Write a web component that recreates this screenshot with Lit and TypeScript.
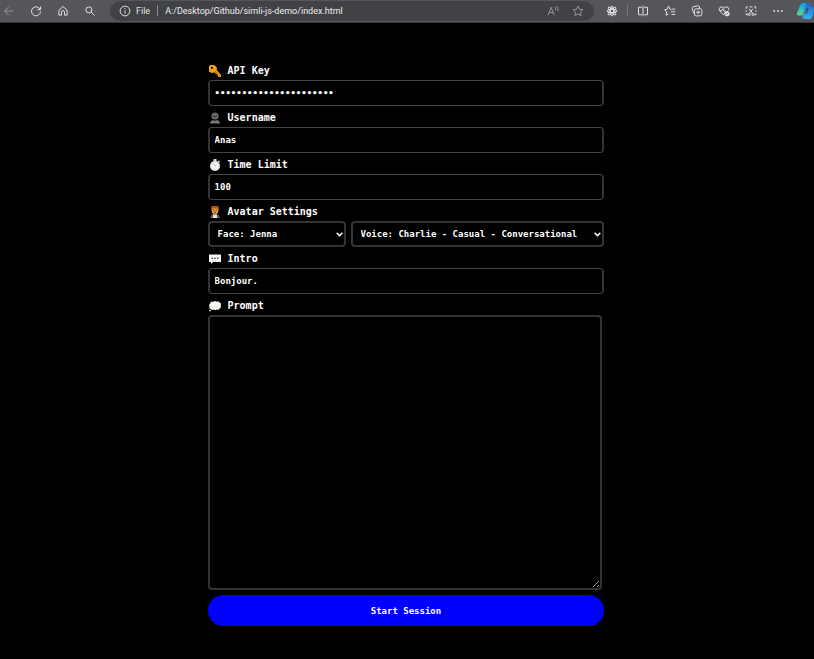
import { LitElement, html, css, svg } from "lit";
import { customElement, state } from "lit/decorators.js";

const line = (body: unknown) => html`<svg class="line" viewBox="0 0 16 16" aria-hidden="true">${body}</svg>`;

const icons = {
  back: line(svg`<path d="M14 8H2M7.500 2.500 2 8l5.500 5.500"/>`),
  reload: line(svg`<path d="M13.500 6A6 6 0 1 0 14 8.500M14 2v4.200H9.800"/>`),
  home: line(svg`<path d="M2.500 7 8 2l5.500 5v6.500H10V9.500a2 2 0 0 0-4 0v4H2.500z"/>`),
  search: line(svg`<circle cx="6.500" cy="6.500" r="4"/><path d="m9.500 9.500 4.500 4.500"/>`),
  info: line(svg`<circle cx="8" cy="8" r="6.500"/><path d="M8 7v4.500M8 4.300v1.400"/>`),
  read: line(svg`<path d="M1.500 13.500 5.500 3l4 10.500M3 10h5M10 3q2 1.500 1.500 4M12.500 1.500q3 2.500 2 6.500"/>`),
  star: line(svg`<path d="m8 1.500 2 4.200 4.600.6-3.400 3.200.9 4.600L8 11.800l-4.100 2.300.9-4.600L1.400 6.300 6 5.700z"/>`),
  react: line(svg`<g stroke-width="1.300"><ellipse cx="8" cy="8" rx="6.800" ry="2.400"/><ellipse cx="8" cy="8" rx="6.800" ry="2.400" transform="rotate(45 8 8)"/><ellipse cx="8" cy="8" rx="6.800" ry="2.400" transform="rotate(90 8 8)"/><ellipse cx="8" cy="8" rx="6.800" ry="2.400" transform="rotate(135 8 8)"/></g>`),
  split: line(svg`<path d="M6.500 3H2v10h4.500M9.500 3H14v10H9.500M8 1v14"/>`),
  favorites: line(svg`<path d="M9.500 6 8 5.700 6 1.500 4.200 5.700.8 6.300 3.500 9l-.8 4.600L6 11.800M10 5.500h5M9 9h6M10 12.500h5"/>`),
  collections: line(svg`<path d="M3.500 11 1.500 4.500q-.3-1.500 1-2L9 1q1.500-.3 2 1l.7 2.500"/><rect x="4.500" y="5" width="10" height="9.500" rx="2.500"/><path d="M9.500 7.200v5M7 9.700h5"/>`),
  health: line(svg`<path d="M8 13.500 2.300 8q-2-3 .5-5 3-1.500 5.200 1.200Q10.200 1.500 13.200 3q2 2 1 4M2 7.500h3L6.500 5l2 4 1-1.500"/><circle class="solid" cx="12" cy="11.500" r="3"/><path class="cut" d="m10.500 13 3-3"/>`),
  capture: line(svg`<path d="M1.500 5V2.500H4M6 2.500h4M12 2.500h2.500V5M14.500 7v2M1.500 7v2M1.500 11v2H4M14.500 11v2H12M5.500 5l4.500 6M10.500 5 6 11"/><circle cx="5.500" cy="12.500" r="1.400"/><circle cx="10.500" cy="12.500" r="1.400"/>`),
  more: line(svg`<g class="solid"><circle cx="3" cy="8" r=".8"/><circle cx="8" cy="8" r=".8"/><circle cx="13" cy="8" r=".8"/></g>`),
  copilot: html`<svg class="copilot" viewBox="0 0 18 18" aria-hidden="true">
    <defs>
      <linearGradient id="left" x1="0" y1="0" x2="0" y2="1"><stop offset="0" stop-color="#1597e8"/><stop offset=".5" stop-color="#20c4bf"/><stop offset="1" stop-color="#79cf71"/></linearGradient>
      <linearGradient id="right" x1="0" y1="0" x2="0" y2="1"><stop offset="0" stop-color="#1b62d9"/><stop offset="1" stop-color="#32b5f4"/></linearGradient>
    </defs>
    <path fill="url(#left)" d="M4 3.500Q5 1 7.500 1H12q-2 1-2.500 3L7.500 11q-.8 2.500-3 2.500H3Q.2 13.500 1 11z"/>
    <path fill="url(#right)" d="M10 1h2q2 0 2.500 2l.6 2H17q1.500 0 1 2.500L16.500 14q-1 3-3.500 3H9q-2 0-2.500-2L6 13.500q1.500-.5 2-2.500l2-7z"/>
    <path fill="#4b4c50" d="m10.500 6-1.500 6 2-.5L12.500 6z"/>
  </svg>`,
};

const emoji = {
  key: html`<svg class="emoji" viewBox="0 0 12 12" aria-hidden="true"><path fill="#f2a20d" fill-rule="evenodd" d="M4.200 0a4 4 0 0 1 3.500 5.300L12 9.800V12h-2.200L8.500 10.500 7.700 9 6.500 8.500 5.300 7.200A4 4 0 1 1 4.200 0zM3 1.700a1.100 1.100 0 1 0 0 2.200 1.100 1.100 0 0 0 0-2.200z"/><path stroke="#b56f08" d="m6 6 5 5.200"/></svg>`,
  user: html`<svg class="emoji" viewBox="0 0 12 12" aria-hidden="true"><circle cx="6" cy="4" r="3.600" fill="#66686b"/><path fill="#77797c" d="M1 11.500q0-3 3.200-3.300h3.600q3.200.3 3.200 3.300z"/><path stroke="#303133" fill="none" d="M4 3.500 6 5l2-2M4.500 8l1.500 1 1.500-1"/></svg>`,
  timer: html`<svg class="emoji" viewBox="0 0 12 12" aria-hidden="true"><path fill="#d9d9d9" d="M4.500 0h3v2h-3zM9.500 1.500l1.500 1-1 1.200-1.400-1z"/><circle cx="6" cy="7" r="5" fill="#f3f3f3"/><circle cx="6" cy="7" r="3.500" fill="#fff" stroke="#c9c9c9" stroke-width=".6"/><path d="m4.800 5 1.200 2 1.500-1" fill="none" stroke="#999" stroke-width=".8"/></svg>`,
  avatar: html`<svg class="emoji" viewBox="0 0 12 12" aria-hidden="true"><path fill="#a65a16" d="M3 0h6l.8 1.500V5H2.200V1.500z"/><path fill="#e99a37" d="M3 2.500h6v3.800L7.500 8h-3L3 6.300z"/><path stroke="#7c3d12" d="M4 4h1.300M6.700 4H8M5 6.300h2"/><path fill="#5c5d61" d="M1.500 12q0-3.500 3-4h3q3 .5 3 4z"/><path fill="#e8e8e8" d="M4.500 8 6 9l1.500-1 .7 4H3.800z"/></svg>`,
  speech: html`<svg class="emoji" viewBox="0 0 12 12" aria-hidden="true"><path fill="#f6f6f6" d="M0 1.500h12V9H4l-2 2V9H0z"/><path fill="#555" d="M2.500 4.500H4V6H2.500zM5.300 4.500h1.400V6H5.300zM8 4.500h1.500V6H8z"/></svg>`,
  thought: html`<svg class="emoji" viewBox="0 0 12 12" aria-hidden="true"><path fill="#f8f8f1" d="M1.500 2.500 3 1.500l1.500.3L6 1l2 .8L10 1.500l.8 1.200 1.200.8-.2 1.700.2 2-1.200 1L10 9.700 8 9.400l-1.500.8L5 9.600l-1.500.4-1.500-.8L.6 8.500 .4 6.500 0 5l.8-1z"/><circle cx="1" cy="10.500" r=".9" fill="#ddd"/></svg>`,
};

@customElement("browser-bar")
class BrowserBar extends LitElement {
  static styles = css`
    :host { display: block; }
    .bar { display: flex; align-items: center; gap: 9px; height: 23px; padding-bottom: 1px; background: #55565a; color: #e2e2e3; border-bottom: 1px solid #38393b; box-sizing: border-box; overflow: hidden; }
    button { display: flex; flex: none; align-items: center; justify-content: center; width: 18px; height: 20px; padding: 0; border: 0; background: none; color: inherit; }
    .dim { color: #96979a; }
    .line { flex: none; width: 12px; height: 12px; fill: none; stroke: currentColor; stroke-width: 1.300; }
    .solid { fill: currentColor; }
    .cut { stroke: #55565a; }
    .copilot { flex: none; width: 18px; height: 18px; }
    .address { display: flex; flex: 1; align-items: center; gap: 7px; min-width: 0; height: 20px; margin-left: 2px; padding: 0 7px 0 9px; border-radius: 10px; background: #414246; box-sizing: border-box; font: 9px Roboto, sans-serif; }
    .site { gap: 5px; width: auto; font: inherit; }
    .url { flex: 1; min-width: 0; padding: 0; border: 0; outline: 0; background: none; color: #eeeeef; font: inherit; }
    .divider { flex: none; width: 1px; height: 11px; background: #8a8b8e; }
    .section { margin: 0 -3px; background: #77787b; }
  `;

  private button(label: string, icon: unknown, tone = "") {
    return html`<button class=${tone} aria-label=${label}>${icon}</button>`;
  }

  render() {
    return html`
      <nav class="bar" aria-label="Browser">
        ${this.button("Back", icons.back, "dim")}
        ${this.button("Refresh", icons.reload)}
        ${this.button("Home", icons.home)}
        ${this.button("Search", icons.search)}
        <div class="address">
          <button class="site">${icons.info}<span>File</span></button>
          <span class="divider"></span>
          <input class="url" aria-label="Address" .value=${"A:/Desktop/Github/simli-js-demo/index.html"} />
          ${this.button("Read aloud", icons.read, "dim")}
          ${this.button("Add to favorites", icons.star, "dim")}
        </div>
        ${this.button("Extension", icons.react)}
        <span class="divider section"></span>
        ${this.button("Split screen", icons.split)}
        ${this.button("Favorites", icons.favorites)}
        ${this.button("Collections", icons.collections)}
        ${this.button("Browser essentials", icons.health)}
        ${this.button("Screenshot", icons.capture)}
        ${this.button("More", icons.more)}
        ${this.button("Copilot", icons.copilot)}
      </nav>
    `;
  }
}

@customElement("app-root")
class AppRoot extends LitElement {
  static styles = css`
    :host { display: block; min-height: 100vh; background: #000; color: #fff; font: bold 9px "DejaVu Sans Mono", monospace; }
    form { display: flex; flex-direction: column; width: 49%; min-width: 320px; margin: 0 auto; padding: 36px 2px 32px 0; box-sizing: border-box; }
    label { display: flex; align-items: center; gap: 7px; height: 21px; padding-top: 2px; box-sizing: border-box; font-size: 10px; }
    .emoji { flex: none; width: 12px; height: 12px; margin-left: 1px; }
    input, select, textarea { box-sizing: border-box; border: 2px solid #333; border-radius: 4px; background: #000; color: #fff; font: inherit; outline: 0; }
    input { width: 100%; height: 26px; padding: 0 5px; border-width: 1px 2px; border-color: #444 #333; }
    .choices { display: grid; grid-template-columns: 138fr 254fr; gap: 5px; }
    .choice { display: grid; grid-template-columns: 1fr auto; align-items: center; min-width: 0; }
    .choice > * { grid-row: 1; }
    select { grid-column: 1 / 3; width: 100%; min-width: 0; height: 26px; padding: 0 15px 0 8px; appearance: none; }
    .chevron { grid-column: 2; width: 7px; height: 5px; margin-right: 3px; fill: none; stroke: #fff; stroke-width: 1.500; pointer-events: none; z-index: 1; }
    textarea { height: 275px; margin-right: 2px; padding: 5px; resize: vertical; }
    .start { height: 31px; margin-top: 5px; border: 0; border-radius: 16px; background: #00f; color: #fff; font: inherit; }
  `;

  @state() private name = "Anas";

  private choice(id: string, label: string, value: string) {
    return html`<div class="choice">
      <select id=${id} aria-label=${label}><option>${value}</option></select>
      <svg class="chevron" viewBox="0 0 7 5" aria-hidden="true"><path d="M.7.9 3.500 3.700 6.300.9"/></svg>
    </div>`;
  }

  render() {
    return html`
      <browser-bar></browser-bar>
      <form @submit=${(e: Event) => e.preventDefault()}>
        <label for="key">${emoji.key}API Key</label>
        <input id="key" type="password" autocomplete="off" .value=${"x".repeat(22)} />
        <label for="user">${emoji.user}Username</label>
        <input id="user" type="text" .value=${this.name} @input=${(e: InputEvent) => { this.name = (e.target as HTMLInputElement).value; }} />
        <label for="limit">${emoji.timer}Time Limit</label>
        <input id="limit" type="text" inputmode="numeric" .value=${"100"} />
        <label for="face">${emoji.avatar}Avatar Settings</label>
        <div class="choices">
          ${this.choice("face", "Face", "Face: Jenna")}
          ${this.choice("voice", "Voice", "Voice: Charlie - Casual - Conversational")}
        </div>
        <label for="intro">${emoji.speech}Intro</label>
        <input id="intro" type="text" .value=${"Bonjour."} />
        <label for="prompt">${emoji.thought}Prompt</label>
        <textarea id="prompt"></textarea>
        <button class="start" type="submit">Start Session</button>
      </form>
    `;
  }
}
